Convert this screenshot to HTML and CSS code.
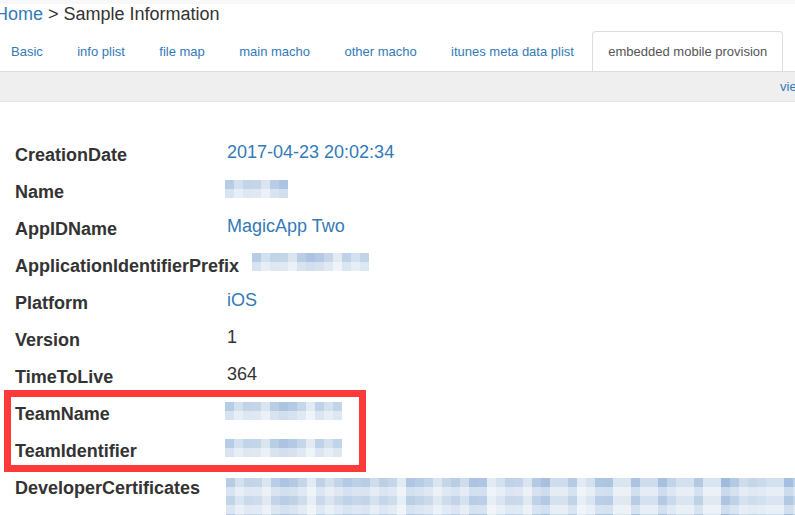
FILE: index.html
```html
<!DOCTYPE html>
<html lang="en">
<head>
   <meta charset="UTF-8">
   <meta name="viewport" content="width=device-width, initial-scale=1.0">
   <title>Sample Information</title>
   <link rel="stylesheet" href="styles.css">
</head>
<body>
   <div class="topbar"></div>
   <div class="page">
       <div class="crumb"><a href="#">Home</a> &gt; Sample Information</div>

       <ul class="tabs">
           <li><a href="#">Basic</a></li>
           <li><a href="#">info plist</a></li>
           <li><a href="#">file map</a></li>
           <li><a href="#">main macho</a></li>
           <li><a href="#">other macho</a></li>
           <li><a href="#">itunes meta data plist</a></li>
           <li class="active"><a href="#">embedded mobile provision</a></li>
       </ul>

       <div class="toolbar"><a href="#">view source</a></div>

       <div class="info">
           <div class="row">
               <div class="key">CreationDate</div>
               <div class="val link">2017-04-23 20:02:34</div>
           </div>
           <div class="row">
               <div class="key">Name</div>
               <div class="val"><span class="blur name-blur"></span></div>
           </div>
           <div class="row">
               <div class="key">AppIDName</div>
               <div class="val link">MagicApp Two</div>
           </div>
           <div class="row">
               <div class="key">ApplicationIdentifierPrefix</div>
               <div class="val"><span class="blur prefix-blur"></span></div>
           </div>
           <div class="row">
               <div class="key">Platform</div>
               <div class="val link">iOS</div>
           </div>
           <div class="row">
               <div class="key">Version</div>
               <div class="val">1</div>
           </div>
           <div class="row">
               <div class="key">TimeToLive</div>
               <div class="val">364</div>
           </div>
           <div class="marked">
               <div class="row">
                   <div class="key">TeamName</div>
                   <div class="val"><span class="blur team-blur"></span></div>
               </div>
               <div class="row">
                   <div class="key">TeamIdentifier</div>
                   <div class="val"><span class="blur team-blur"></span></div>
               </div>
           </div>
           <div class="row">
               <div class="key">DeveloperCertificates</div>
               <div class="val wide"><span class="blur cert-blur"></span></div>
           </div>
       </div>
   </div>
</body>
</html>
```

FILE: styles.css
```css
html, body {
    overflow: hidden;
}
body {
    margin: 0;
    font-family: "Liberation Sans", Arial, sans-serif;
    color: #333;
    background: #fff;
}
a {
    color: #337ab7;
    text-decoration: none;
}
.topbar {
    height: 4px;
    background: #f8f8f8;
}
.page {
    margin-left: -5px;
}
.crumb {
    font-size: 18px;
    line-height: 20px;
    margin-bottom: 7px;
    white-space: nowrap;
}
.tabs {
    display: flex;
    list-style: none;
    margin: 0;
    padding: 0;
    border-bottom: 1px solid #ddd;
    white-space: nowrap;
}
.tabs li {
    margin-right: 2.4px;
}
.tabs a {
    display: block;
    font-size: 13px;
    line-height: 19px;
    padding: 10px 15px;
    border: 1px solid transparent;
    border-bottom: none;
    border-radius: 4px 4px 0 0;
}
.tabs .active a {
    color: #555;
    background: #fff;
    border-color: #ddd;
}
.toolbar {
    background: #efefef;
    border-bottom: 1px solid #e4e4e4;
    font-size: 13px;
    line-height: 29px;
    padding-left: 785px;
    white-space: nowrap;
}
.info {
    padding: 35px 0 0 20px;
}
.row {
    display: flex;
    min-height: 37px;
}
.key {
    min-width: 199px;
    margin-right: 13px;
    font-size: 18px;
    font-weight: bold;
    line-height: 37px;
    white-space: nowrap;
}
.val {
    font-size: 18px;
    line-height: 31px;
}
.val.link {
    color: #337ab7;
}
.val.wide {
    flex: 1;
}
.marked {
    position: relative;
}
.marked::after {
    content: "";
    position: absolute;
    left: -11px;
    top: -6px;
    width: 362px;
    height: 82px;
    box-sizing: border-box;
    border: 7px solid #fd3a3a;
}
.blur {
    display: block;
    margin-top: 6px;
    height: 18px;
    background-color: #d3e0ee;
    background-image:
        linear-gradient(180deg, rgba(255,255,255,0) 0 9px, rgba(255,255,255,.45) 9px 18px, rgba(255,255,255,.15) 18px 27px, rgba(255,255,255,.5) 27px 36px),
        repeating-linear-gradient(90deg, rgba(130,168,212,.35) 0 9px, transparent 9px 27px, rgba(130,168,212,.25) 27px 36px, transparent 36px 54px, rgba(120,160,210,.4) 54px 63px),
        repeating-linear-gradient(90deg, #d3e0ee 0 18px, #c2d4e8 18px 27px, #dbe5f0 27px 45px, #b9cde4 45px 54px, #cfdcec 54px 72px, #c6d6e9 72px 81px, #e2ebf4 81px 90px);
    background-size: 100% 36px, auto, auto;
}
.name-blur {
    width: 63px;
    margin-left: -2px;
}
.prefix-blur {
    width: 117px;
    margin-top: 5px;
}
.team-blur {
    width: 117px;
    margin-left: -2px;
}
.cert-blur {
    height: 40px;
    margin-top: 8px;
    margin-left: -1px;
}
```
